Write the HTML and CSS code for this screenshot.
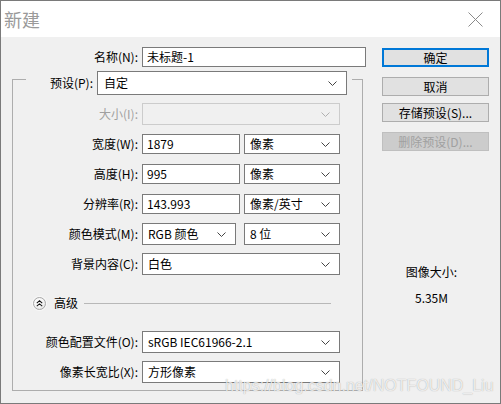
FILE: index.html
```html
<!DOCTYPE html>
<html>
<head>
<meta charset="utf-8">
<link rel="stylesheet" href="styles.css">
</head>
<body>
<div class="window">
  <div class="titlebar">
    <span class="title">新建</span>
    <svg class="close" viewBox="0 0 15 15"><path d="M0.5 0.5L14.5 14.5M14.5 0.5L0.5 14.5"/></svg>
  </div>
  <div class="content">
    <div class="left">
      <div class="namerow">
        <span class="lbl lbl-name">名称(N):</span>
        <div class="field name-field">未标题-1</div>
      </div>
      <div class="group">
        <div class="legend">
          <span class="lbl lbl-legend">预设(P):</span>
          <div class="select preset"><span>自定</span><svg class="chev" viewBox="0 0 9 5"><polyline points="0.5,0.5 4.5,4.5 8.5,0.5"/></svg></div>
        </div>
        <div class="rows">
          <div class="row">
            <span class="lbl disabled">大小(I):</span>
            <div class="select wide dis"><span></span><svg class="chev" viewBox="0 0 9 5"><polyline points="0.5,0.5 4.5,4.5 8.5,0.5"/></svg></div>
          </div>
          <div class="row">
            <span class="lbl">宽度(W):</span>
            <div class="ctrls">
              <div class="field num">1879</div>
              <div class="select unit"><span>像素</span><svg class="chev" viewBox="0 0 9 5"><polyline points="0.5,0.5 4.5,4.5 8.5,0.5"/></svg></div>
            </div>
          </div>
          <div class="row">
            <span class="lbl">高度(H):</span>
            <div class="ctrls">
              <div class="field num">995</div>
              <div class="select unit"><span>像素</span><svg class="chev" viewBox="0 0 9 5"><polyline points="0.5,0.5 4.5,4.5 8.5,0.5"/></svg></div>
            </div>
          </div>
          <div class="row">
            <span class="lbl">分辨率(R):</span>
            <div class="ctrls">
              <div class="field num">143.993</div>
              <div class="select unit"><span>像素/英寸</span><svg class="chev" viewBox="0 0 9 5"><polyline points="0.5,0.5 4.5,4.5 8.5,0.5"/></svg></div>
            </div>
          </div>
          <div class="row">
            <span class="lbl">颜色模式(M):</span>
            <div class="ctrls ctrls-mode">
              <div class="select mode tall"><span>RGB 颜色</span><svg class="chev" viewBox="0 0 9 5"><polyline points="0.5,0.5 4.5,4.5 8.5,0.5"/></svg></div>
              <div class="select unit tall"><span>8 位</span><svg class="chev" viewBox="0 0 9 5"><polyline points="0.5,0.5 4.5,4.5 8.5,0.5"/></svg></div>
            </div>
          </div>
          <div class="row">
            <span class="lbl">背景内容(C):</span>
            <div class="select wide"><span>白色</span><svg class="chev" viewBox="0 0 9 5"><polyline points="0.5,0.5 4.5,4.5 8.5,0.5"/></svg></div>
          </div>
          <div class="adv">
            <span class="toggle"><svg viewBox="0 0 9 9"><polyline points="1,4 4.5,1 8,4"/><polyline points="1,8 4.5,5 8,8"/></svg></span>
            <span class="adv-text">高级</span>
            <span class="adv-line"></span>
          </div>
          <div class="row">
            <span class="lbl">颜色配置文件(O):</span>
            <div class="select wide"><span>sRGB IEC61966-2.1</span><svg class="chev" viewBox="0 0 9 5"><polyline points="0.5,0.5 4.5,4.5 8.5,0.5"/></svg></div>
          </div>
          <div class="row">
            <span class="lbl">像素长宽比(X):</span>
            <div class="select wide"><span>方形像素</span><svg class="chev" viewBox="0 0 9 5"><polyline points="0.5,0.5 4.5,4.5 8.5,0.5"/></svg></div>
          </div>
        </div>
      </div>
    </div>
    <div class="right">
      <div class="btn default">确定</div>
      <div class="btn b2">取消</div>
      <div class="btn b3">存储预设(S)...</div>
      <div class="btn b4 btn-dis">删除预设(D)...</div>
      <div class="info">
        <div class="info-label">图像大小:</div>
        <div class="info-value">5.35M</div>
      </div>
    </div>
  </div>
  <div class="watermark">https://blog.csdn.net/NOTFOUND_Liu</div>
</div>
</body>
</html>
```

FILE: styles.css
```css
* { box-sizing: border-box; margin: 0; padding: 0; }
body {
  margin: 0;
  width: 501px;
  height: 404px;
  overflow: hidden;
  font-family: "Noto Sans CJK SC", "Microsoft YaHei", sans-serif;
  font-size: 12px;
  color: #000;
  background: #f0f0f0;
}
.window {
  position: relative;
  width: 501px;
  height: 404px;
  border: 1px solid #7a7a7a;
  background: #f0f0f0;
  display: flex;
  flex-direction: column;
}
.titlebar {
  flex: none;
  height: 36px;
  background: #fff;
  display: flex;
  align-items: center;
  justify-content: space-between;
  padding: 0 17px 0 3px;
}
.title { font-size: 18px; color: #9a9a9a; line-height: 20px; }
.close { width: 15px; height: 15px; }
.close path { stroke: #8a8a8a; stroke-width: 1; fill: none; }

.content { flex: 1; display: flex; }
.left { flex: none; width: 362px; padding: 10px 0 0 11px; display: flex; flex-direction: column; }

.lbl { flex: none; width: 125px; text-align: right; white-space: nowrap; line-height: 16px; }
.lbl-name { width: 126px; }
.lbl-legend { width: 62px; }
.disabled { color: #a0a0a0; }

.namerow { display: flex; align-items: center; gap: 4px; height: 20px; }

.field {
  height: 20px;
  background: #fff;
  border: 1px solid #7a7a7a;
  padding-left: 4px;
  display: flex;
  align-items: center;
  white-space: nowrap;
  line-height: 16px;
}
.name-field { width: 224px; flex: none; }
.num { width: 98px; }

.select {
  height: 22px;
  background: #fff;
  border: 1px solid #7a7a7a;
  padding: 0 9px 0 5px;
  display: flex;
  align-items: center;
  justify-content: space-between;
  white-space: nowrap;
  line-height: 16px;
}
.chev { width: 9px; height: 5px; flex: none; }
.chev polyline { fill: none; stroke: #444; stroke-width: 1; }
.preset { width: 250px; height: 24px; padding-left: 6px; }
.wide { width: 198px; }
.unit { width: 96px; height: 20px; }
.unit.tall { height: 22px; }
.mode { width: 94px; }
.dis { background: #f0f0f0; border-color: #cccccc; }
.dis .chev polyline { stroke: #b0b0b0; }

.group {
  margin-top: 12px;
  width: 351px;
  border: 1px solid #adadad;
  padding-bottom: 3px;
}
.legend {
  display: flex;
  align-items: center;
  gap: 4px;
  width: max-content;
  height: 24px;
  margin: -9px 0 0 13px;
  padding: 0 5px;
  background: #f0f0f0;
}
.rows { margin-top: 4px; }
.row { display: flex; align-items: center; gap: 4px; height: 30px; }
.ctrls { display: flex; align-items: center; gap: 4px; }
.ctrls-mode { gap: 8px; }

.adv { display: flex; align-items: center; height: 48px; padding-left: 20px; }
.toggle {
  width: 13px;
  height: 13px;
  border-radius: 50%;
  border: 1px solid #a8a8a8;
  background: radial-gradient(circle at 40% 35%, #ffffff 0%, #f4f4f4 50%, #d8d8d8 100%);
  display: flex;
  align-items: center;
  justify-content: center;
  box-shadow: 0 0 0 1px #f8f8f8;
}
.toggle svg { width: 7px; height: 7px; }
.toggle polyline { fill: none; stroke: #111; stroke-width: 1.3; }
.adv-text { margin-left: 8px; line-height: 16px; }
.adv-line { flex: 1; height: 1px; background: #b8b8b8; margin: 0 31px 0 6px; }

.right { flex: 1; display: flex; flex-direction: column; padding-top: 11px; }
.btn {
  margin-left: 19px;
  width: 107px;
  height: 19px;
  border: 1px solid #adadad;
  background: #e1e1e1;
  display: flex;
  align-items: center;
  justify-content: center;
  white-space: nowrap;
  line-height: 16px;
}
.default { border: 2px solid #0078d7; }
.b2 { margin-top: 10px; }
.b3 { margin-top: 7px; }
.b4 { margin-top: 10px; }
.btn-dis { background: #cccccc; border-color: #bfbfbf; color: #a0a0a0; }

.info { margin-top: 113px; text-align: center; line-height: 16px; }
.info-value { margin-top: 10px; }

.watermark {
  position: absolute;
  left: 224px;
  top: 377px;
  font-family: "Liberation Sans", Arial, sans-serif;
  font-size: 16px;
  line-height: 16px;
  color: rgba(255, 255, 255, 0.8);
  text-shadow: 0 0 1px rgba(0, 0, 0, 0.35);
  white-space: nowrap;
}
```
